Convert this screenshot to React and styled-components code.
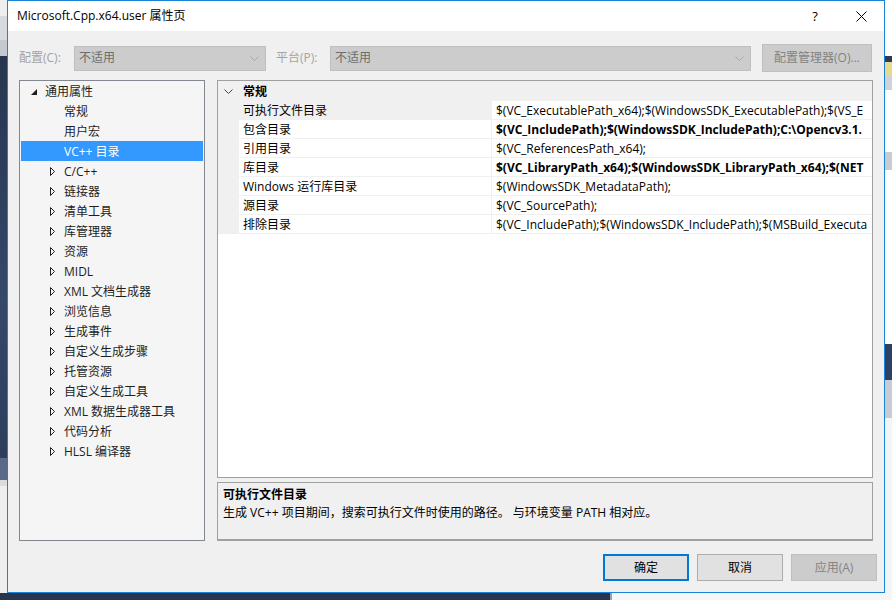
import React from 'react'
import styled, { createGlobalStyle } from 'styled-components'

const GlobalStyle = createGlobalStyle`
  html, body {
    margin: 0;
    padding: 0;
  }
  body {
    font-family: 'Open Sans', 'Noto Sans CJK SC', sans-serif;
    font-size: 12px;
    color: #000;
  }
`

const treeItems = [
  { label: '通用属性', level: 0, expander: 'open' },
  { label: '常规', level: 1 },
  { label: '用户宏', level: 1 },
  { label: 'VC++ 目录', level: 1, selected: true },
  { label: 'C/C++', level: 1, expander: 'closed' },
  { label: '链接器', level: 1, expander: 'closed' },
  { label: '清单工具', level: 1, expander: 'closed' },
  { label: '库管理器', level: 1, expander: 'closed' },
  { label: '资源', level: 1, expander: 'closed' },
  { label: 'MIDL', level: 1, expander: 'closed' },
  { label: 'XML 文档生成器', level: 1, expander: 'closed' },
  { label: '浏览信息', level: 1, expander: 'closed' },
  { label: '生成事件', level: 1, expander: 'closed' },
  { label: '自定义生成步骤', level: 1, expander: 'closed' },
  { label: '托管资源', level: 1, expander: 'closed' },
  { label: '自定义生成工具', level: 1, expander: 'closed' },
  { label: 'XML 数据生成器工具', level: 1, expander: 'closed' },
  { label: '代码分析', level: 1, expander: 'closed' },
  { label: 'HLSL 编译器', level: 1, expander: 'closed' },
]

// values are cut where the grid cuts them in the dialog
const properties = [
  {
    name: '可执行文件目录',
    value: '$(VC_ExecutablePath_x64);$(WindowsSDK_ExecutablePath);$(VS_E',
    selected: true,
  },
  {
    name: '包含目录',
    value: '$(VC_IncludePath);$(WindowsSDK_IncludePath);C:\\Opencv3.1.',
    bold: true,
  },
  { name: '引用目录', value: '$(VC_ReferencesPath_x64);' },
  {
    name: '库目录',
    value: '$(VC_LibraryPath_x64);$(WindowsSDK_LibraryPath_x64);$(NET',
    bold: true,
  },
  { name: 'Windows 运行库目录', value: '$(WindowsSDK_MetadataPath);' },
  { name: '源目录', value: '$(VC_SourcePath);' },
  {
    name: '排除目录',
    value: '$(VC_IncludePath);$(WindowsSDK_IncludePath);$(MSBuild_Executa',
  },
]

// the bits of desktop / Visual Studio that peek out around the dialog
const Desktop = styled.div`
  display: grid;
  grid-template-columns: 7px 878px 7px;
  grid-template-rows: 593px 7px;
  width: 892px;
  height: 600px;
  overflow: hidden;
  background: #f5f5f5;
`

const LeftEdge = styled.div`
  background: linear-gradient(
    to bottom,
    #eeeeee 0 16px,
    #d6d9de 16px 40px,
    #c4c8cf 40px 56px,
    #27354f 56px,
    #34486a 300px,
    #2d3e5c 458px,
    #5a6a86 458px 480px,
    #dcdcdc 480px 486px,
    #eeeeee 486px
  );
`

const RightEdge = styled.div`
  background: linear-gradient(
    to bottom,
    #ffffff 0 56px,
    #2d3a52 56px 62px,
    #e6d98a 62px 76px,
    #cfd2d8 76px 90px,
    #ffffff 90px 152px,
    #c8cbd2 152px 170px,
    #ffffff 170px 344px,
    #2f4163 344px 380px,
    #c8cbd2 380px 418px,
    #f4f4f4 418px
  );
`

const BottomEdge = styled.div`
  grid-column: 1 / -1;
  background: linear-gradient(
    to right,
    #27354f 0 610px,
    #9aa2b0 610px 612px,
    #f6f6f6 612px
  );
`

const Dialog = styled.div`
  display: flex;
  flex-direction: column;
  border: 1px solid #1883d7;
  background: #f0f0f0;
`

const TitleBar = styled.div`
  display: flex;
  align-items: center;
  height: 30px;
  padding-left: 9px;
  background: #fff;
`

const TitleText = styled.div`
  flex: 1;
  font-size: 12px;
  line-height: 16px;
  padding-bottom: 1px;
`

const CaptionButton = styled.div`
  display: flex;
  align-items: center;
  justify-content: center;
  width: 46px;
  height: 30px;
  font-size: 13px;
  line-height: 16px;
`

const Body = styled.div`
  display: flex;
  flex-direction: column;
  padding: 13px 11px 11px 11px;
`

const Toolbar = styled.div`
  display: flex;
  align-items: center;
  height: 28px;
  margin-bottom: 8px;
`

const FieldLabel = styled.div`
  flex: none;
  width: ${({ $width }) => $width}px;
  margin-left: ${({ $offset }) => $offset || 0}px;
  color: #a3a3a3;
  line-height: 16px;
`

const Combo = styled.div`
  display: flex;
  align-items: center;
  flex: none;
  box-sizing: border-box;
  width: ${({ $width }) => $width}px;
  height: 25px;
  padding: 0 6px 0 4px;
  background: #cccccc;
  border: 1px solid #bfbfbf;
  color: #6d6d6d;
`

const ComboText = styled.div`
  flex: 1;
  line-height: 16px;
`

const Button = styled.div`
  display: flex;
  align-items: center;
  justify-content: center;
  flex: none;
  box-sizing: border-box;
  width: ${({ $width }) => $width}px;
  height: ${({ $height }) => $height || 27}px;
  margin-left: ${({ $offset }) => $offset || 0}px;
  line-height: 16px;
  background: ${({ $disabled }) => ($disabled ? '#cccccc' : '#e1e1e1')};
  color: ${({ $disabled }) => ($disabled ? '#838383' : '#000')};
  border: ${({ $primary, $disabled }) =>
    $primary ? '2px solid #0078d7' : $disabled ? '1px solid #bfbfbf' : '1px solid #adadad'};
`

const Main = styled.div`
  display: flex;
  gap: 12px;
  height: 461px;
`

const Tree = styled.div`
  flex: none;
  box-sizing: border-box;
  width: 186px;
  border: 1px solid #828790;
  background: #f5f5f5;
`

const TreeRow = styled.div`
  display: flex;
  align-items: center;
  height: 20px;
  margin: 0 1px;
  padding-left: ${({ $level }) => 10 + $level * 19}px;
  background: ${({ $selected }) => ($selected ? '#3399ff' : 'transparent')};
  color: ${({ $selected }) => ($selected ? '#fff' : '#1e1e1e')};
`

const Expander = styled.div`
  display: flex;
  align-items: center;
  flex: none;
  width: 14px;
  height: 20px;
  padding-top: 1px;
`

const TreeLabel = styled.div`
  padding-top: 2px;
  line-height: 16px;
  white-space: nowrap;
`

const RightPane = styled.div`
  display: flex;
  flex-direction: column;
  flex: 1;
  min-width: 0;
  gap: 4px;
`

const Grid = styled.div`
  display: flex;
  flex-direction: column;
  box-sizing: border-box;
  height: 398px;
  border: 1px solid #a0a0a0;
  background: #fff;
  overflow: hidden;
`

const CategoryRow = styled.div`
  display: flex;
  align-items: center;
  height: 20px;
  background: #f0f0f0;
  font-weight: 700;
`

const Gutter = styled.div`
  display: flex;
  align-items: center;
  justify-content: center;
  flex: none;
  width: 21px;
  height: 100%;
  background: #f0f0f0;
`

const CategoryLabel = styled.div`
  padding: 2px 0 0 4px;
  line-height: 16px;
`

const PropRow = styled.div`
  display: flex;
  height: 19px;
`

const NameCell = styled.div`
  display: flex;
  align-items: center;
  box-sizing: border-box;
  flex: none;
  width: 253px;
  padding: 2px 0 0 4px;
  border-right: 1px solid #f0f0f0;
  border-bottom: 1px solid #f0f0f0;
  background: ${({ $selected }) => ($selected ? '#f0f0f0' : '#fff')};
  line-height: 16px;
  white-space: nowrap;
`

const ValueCell = styled.div`
  display: flex;
  align-items: center;
  box-sizing: border-box;
  flex: 1;
  min-width: 0;
  padding: 2px 0 0 4px;
  border-bottom: 1px solid #f0f0f0;
  font-weight: ${({ $bold }) => ($bold ? 700 : 400)};
  line-height: 16px;
  white-space: nowrap;
  overflow: hidden;
`

const Description = styled.div`
  flex: 1;
  padding: 3px 5px 0;
  border: 1px solid #a0a0a0;
  border-bottom-width: 2px;
  background: #f0f0f0;
  line-height: 18px;
`

const DescTitle = styled.div`
  font-weight: 700;
`

const ButtonRow = styled.div`
  display: flex;
  justify-content: flex-end;
  gap: 8px;
  margin: 13px -4px 0 0;
`

const Triangle = ({ open }) =>
  open ? (
    <svg width="6" height="6" viewBox="0 0 6 6">
      <path d="M6 0 L6 6 L0 6 Z" fill="#1e1e1e" />
    </svg>
  ) : (
    <svg width="6" height="9" viewBox="0 0 6 9">
      <path d="M0.5 0.5 L4.5 4.5 L0.5 8.5 Z" fill="none" stroke="#1e1e1e" strokeWidth="1" />
    </svg>
  )

const Chevron = ({ color = '#9a9a9a', w = 9, h = 5 }) => (
  <svg width={w} height={h} viewBox={`0 0 ${w} ${h}`}>
    <path d={`M0.5 0.5 L${w / 2} ${h - 0.5} L${w - 0.5} 0.5`} fill="none" stroke={color} strokeWidth="1" />
  </svg>
)

const CloseIcon = () => (
  <svg width="11" height="11" viewBox="0 0 11 11">
    <path d="M0.5 0.5 L10.5 10.5 M10.5 0.5 L0.5 10.5" stroke="#000" strokeWidth="1" />
  </svg>
)

const App = () => {
  return (
    <>
      <GlobalStyle />
      <Desktop>
        <LeftEdge />
        <Dialog>
          <TitleBar>
            <TitleText>Microsoft.Cpp.x64.user 属性页</TitleText>
            <CaptionButton>?</CaptionButton>
            <CaptionButton>
              <CloseIcon />
            </CaptionButton>
          </TitleBar>

          <Body>
            <Toolbar>
              <FieldLabel $width={55}>配置(C):</FieldLabel>
              <Combo $width={192}>
                <ComboText>不适用</ComboText>
                <Chevron color="#a8a8a8" />
              </Combo>
              <FieldLabel $width={54} $offset={10}>平台(P):</FieldLabel>
              <Combo $width={421}>
                <ComboText>不适用</ComboText>
                <Chevron color="#a8a8a8" />
              </Combo>
              <Button $width={110} $height={28} $offset={11} $disabled>
                配置管理器(O)...
              </Button>
            </Toolbar>

            <Main>
              <Tree>
                {treeItems.map((item) => (
                  <TreeRow key={item.label} $level={item.level} $selected={item.selected}>
                    <Expander>{item.expander && <Triangle open={item.expander === 'open'} />}</Expander>
                    <TreeLabel>{item.label}</TreeLabel>
                  </TreeRow>
                ))}
              </Tree>

              <RightPane>
                <Grid>
                  <CategoryRow>
                    <Gutter>
                      <Chevron color="#444" />
                    </Gutter>
                    <CategoryLabel>常规</CategoryLabel>
                  </CategoryRow>
                  {properties.map((p) => (
                    <PropRow key={p.name}>
                      <Gutter />
                      <NameCell $selected={p.selected}>{p.name}</NameCell>
                      <ValueCell $bold={p.bold}>{p.value}</ValueCell>
                    </PropRow>
                  ))}
                </Grid>
                <Description>
                  <DescTitle>可执行文件目录</DescTitle>
                  <div>生成 VC++ 项目期间，搜索可执行文件时使用的路径。 与环境变量 PATH 相对应。</div>
                </Description>
              </RightPane>
            </Main>

            <ButtonRow>
              <Button $width={86} $primary>确定</Button>
              <Button $width={86}>取消</Button>
              <Button $width={86} $disabled>应用(A)</Button>
            </ButtonRow>
          </Body>
        </Dialog>
        <RightEdge />
        <BottomEdge />
      </Desktop>
    </>
  )
}

export default App
